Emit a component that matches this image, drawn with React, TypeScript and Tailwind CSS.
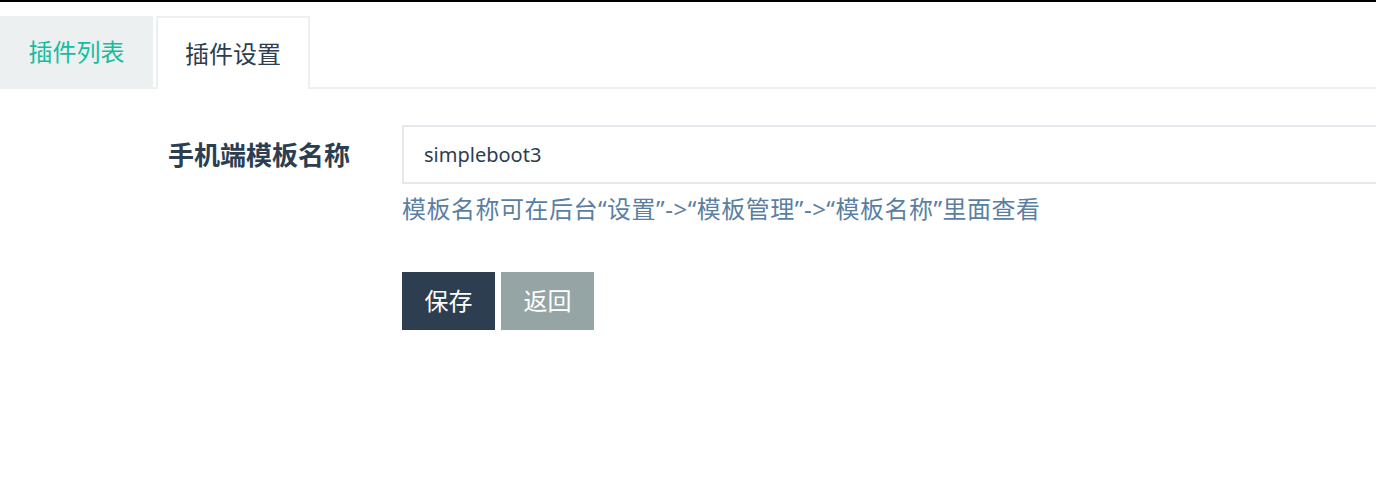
export default function App() {
  const font = { fontFamily: '"Noto Sans", "Noto Sans CJK SC", sans-serif' };
  return (
    <div className="w-[1376px] h-[500px] bg-white overflow-hidden" style={font}>
      <div className="h-[2px] bg-black" />
      <div className="mt-[14px] flex border-b-2 border-[#ecf0f1] h-[73px]">
        <div className="w-[153px] h-[71px] bg-[#ecf0f1] flex items-center justify-center text-[24px] text-[#18bc9c] mr-[3px]">
          插件列表
        </div>
        <div className="w-[154px] h-[73px] -mb-[2px] bg-white border-2 border-b-0 border-[#ecf0f1] flex items-center justify-center text-[24px] text-[#2c3e50]">
          插件设置
        </div>
      </div>
      <div className="mt-[36px] flex items-center">
        <div className="w-[402px] shrink-0 pr-[52px] text-right text-[26px] font-bold text-[#2c3e50] leading-none">
          手机端模板名称
        </div>
        <div className="shrink-0 w-[1100px] h-[59px] border-2 border-[#e5e8ec] flex items-center pl-[20px] text-[20px] text-[#2c3e50]">
          simpleboot3
        </div>
      </div>
      <div className="pl-[402px] mt-[8px] text-[24px] tracking-[0.5px] leading-[34px] text-[#5b7fa3] whitespace-nowrap">
        模板名称可在后台“设置”-&gt;“模板管理”-&gt;“模板名称”里面查看
      </div>
      <div className="pl-[402px] mt-[46px] flex gap-[6px]">
        <div className="w-[93px] h-[58px] bg-[#2c3e50] text-white text-[24px] flex items-center justify-center">
          保存
        </div>
        <div className="w-[93px] h-[58px] bg-[#95a5a6] text-white text-[24px] flex items-center justify-center">
          返回
        </div>
      </div>
    </div>
  );
}
